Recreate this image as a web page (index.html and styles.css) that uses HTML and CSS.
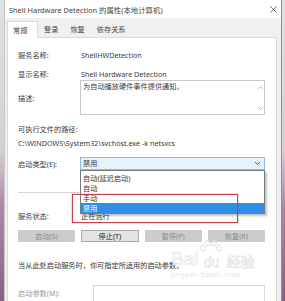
FILE: index.html
```html
<!DOCTYPE html>
<html>
<head>
<meta charset="utf-8">
<link rel="stylesheet" href="styles.css">
</head>
<body>
<div class="dialog">
  <div class="titlebar">
    <span class="title">Shell Hardware Detection 的属性(本地计算机)</span>
    <svg class="close" width="7" height="7" viewBox="0 0 7 7"><path d="M0.5 0.5L6.5 6.5M6.5 0.5L0.5 6.5" stroke="#555" stroke-width="0.9"/></svg>
  </div>
  <div class="tabs">
    <div class="tab active">常规</div>
    <div class="tab">登录</div>
    <div class="tab">恢复</div>
    <div class="tab">依存关系</div>
  </div>
  <div class="panel">
    <div class="row r-name"><span class="lbl">服务名称:</span><span class="val">ShellHWDetection</span></div>
    <div class="row r-disp"><span class="lbl">显示名称:</span><span class="val">Shell Hardware Detection</span></div>
    <div class="row r-desc">
      <span class="lbl">描述:</span>
      <div class="textbox">
        <span class="tb-text">为自动播放硬件事件提供通知。</span>
        <div class="scroll">
          <svg width="7" height="5" viewBox="0 0 7 5"><path d="M1 4L3.5 1.5L6 4" fill="none" stroke="#b5b5b5" stroke-width="0.9"/></svg>
          <svg width="7" height="5" viewBox="0 0 7 5"><path d="M1 1L3.5 3.5L6 1" fill="none" stroke="#b5b5b5" stroke-width="0.9"/></svg>
        </div>
      </div>
    </div>
    <div class="line r-pathlbl">可执行文件的路径:</div>
    <div class="line r-path">C:\WINDOWS\System32\svchost.exe -k netsvcs</div>
    <div class="row r-start">
      <span class="lbl">启动类型(E):</span>
      <div class="combo">
        <span>禁用</span>
        <svg width="7" height="5" viewBox="0 0 7 5"><path d="M1 1L3.5 3.5L6 1" fill="none" stroke="#444" stroke-width="0.9"/></svg>
        <div class="dropdown">
          <div class="opt">自动(延迟启动)</div>
          <div class="opt">自动</div>
          <div class="opt">手动</div>
          <div class="opt sel">禁用</div>
        </div>
      </div>
    </div>
    <div class="sep"></div>
    <div class="row r-status"><span class="lbl">服务状态:</span><span class="val">正在运行</span></div>
    <div class="buttons">
      <div class="btn dis">启动(S)</div>
      <div class="btn">停止(T)</div>
      <div class="btn dis">暂停(P)</div>
      <div class="btn dis">恢复(R)</div>
    </div>
    <div class="line r-note">当从此处启动服务时，你可指定所适用的启动参数。</div>
    <div class="row2 r-param"><span class="lbl dim">启动参数(M):</span><div class="input"></div></div>
    <div class="mark">
      <div class="mark-main"><span class="bai">Bai</span><span class="paw"><svg width="24" height="20" viewBox="0 0 24 20"><g fill="none" stroke="#e0e0e0" stroke-width="1"><ellipse cx="4" cy="9" rx="2.3" ry="2.8"/><ellipse cx="9" cy="4" rx="2.3" ry="2.8"/><ellipse cx="15" cy="4" rx="2.3" ry="2.8"/><ellipse cx="20" cy="9" rx="2.3" ry="2.8"/></g></svg><span class="du">du</span></span><span class="jy">经验</span></div>
      <div class="mark-url">jingyan.baidu.com</div>
    </div>
    <div class="redbox"></div>
  </div>
</div>
</body>
</html>
```
FILE: styles.css
```css
* { box-sizing: border-box; }
html, body { margin: 0; height: 301px; overflow: hidden; }
body {
  background: linear-gradient(to bottom, #e2e0e2 0%, #d6d0d5 50%, #b089a6 68%, #8d5f82 100%);
  font-family: "Noto Sans", "Noto Sans CJK SC", sans-serif;
  font-size: 7.2px;
  color: #3a3a3a;
}
.dialog {
  margin-left: 4px;
  width: 278px;
  height: 301px;
  border-left: 1px solid #c4c4c4;
  border-right: 1px solid #8e8e8e;
  background: #f0f0f0;
  display: flex;
  flex-direction: column;
  overflow: hidden;
}
.titlebar {
  height: 18px;
  flex: none;
  background: #fff;
  display: flex;
  align-items: center;
  justify-content: space-between;
  padding: 1px 4px 0 4px;
  color: #444;
  font-size: 7.4px;
}
.tabs {
  height: 19px;
  flex: none;
  display: flex;
  align-items: flex-end;
  padding-left: 2px;
  position: relative;
  z-index: 2;
}
.tab {
  height: 15px;
  padding: 0 6px;
  line-height: 14px;
  color: #444;
}
.tab.active {
  height: 17px;
  line-height: 16px;
  background: #fff;
  border: 1px solid #dadada;
  border-bottom: none;
  margin-bottom: -1px;
  width: 31px;
  padding: 0 0 0 5px;
}
.panel {
  flex: 1;
  margin: 0 4px 0 2px;
  background: #fff;
  border: 1px solid #dadada;
  padding: 11px 11px 0 10px;
  position: relative;
}
.row {
  display: grid;
  grid-template-columns: 62px 1fr;
  align-items: center;
  line-height: 12px;
}
.row2 {
  display: grid;
  grid-template-columns: 75px 1fr;
  align-items: center;
  line-height: 12px;
}
.val { padding-left: 1px; }
.line { line-height: 12px; }
.r-disp { margin-top: 7px; }
.textbox {
  height: 35px;
  border: 1px solid #c9c9c9;
  display: flex;
  justify-content: space-between;
  padding: 0 0 0 2px;
}
.tb-text { line-height: 11px; }
.scroll {
  width: 8px;
  display: flex;
  flex-direction: column;
  justify-content: space-between;
  align-items: center;
  padding: 4px 0 3px;
}
.scroll svg { display: block; }
.r-pathlbl { margin-top: 8px; }
.r-path { margin-top: 2px; }
.r-start { margin-top: 8px; }
.combo {
  position: relative;
  height: 13px;
  background: #e5f1fb;
  border: 1px solid #8cbbe8;
  display: flex;
  align-items: center;
  justify-content: space-between;
  padding: 0 3px 0 2px;
  line-height: 11px;
}
.dropdown {
  position: absolute;
  top: 12px;
  left: -1px;
  right: -1px;
  background: #fff;
  border: 1px solid #7a7a7a;
  padding: 2px 0 0;
  box-shadow: 2px 2px 2px rgba(0,0,0,0.25);
  z-index: 3;
}
.opt {
  height: 10px;
  line-height: 10px;
  padding-left: 2px;
  color: #333;
}
.opt.sel { background: #2f8fe6; color: #fff; }
.sep {
  margin-top: 22px;
  height: 1px;
  background: #d5d5d5;
}
.r-status { margin-top: 17px; }
.buttons {
  margin-top: 8px;
  display: grid;
  grid-template-columns: repeat(4, 1fr);
  gap: 6px;
}
.btn {
  height: 12px;
  line-height: 10px;
  text-align: center;
  background: #e3e3e3;
  border: 1px solid #adadad;
  color: #222;
}
.btn.dis {
  background: #cccccc;
  border-color: #cccccc;
  color: #8a8a8a;
}
.r-note { margin-top: 17px; color: #333; }
.r-param { margin-top: 14px; align-items: start; }
.dim { color: #9a9a9a; margin-top: 2px; }
.input { height: 20px; border: 1px solid #d9d9d9; }
.mark {
  position: absolute;
  left: 163px;
  top: 201px;
  width: 90px;
  pointer-events: none;
}
.mark-main {
  display: flex;
  align-items: flex-end;
  font-family: "Liberation Sans", sans-serif;
  font-size: 19px;
  line-height: 20px;
  -webkit-text-stroke: 0.6px #e2e2e2;
  color: rgba(255,255,255,0.6);
}
.paw {
  display: inline-flex;
  flex-direction: column;
  align-items: center;
  margin: 0 1px;
}
.paw svg { display: block; margin-bottom: -4px; }
.du { font-size: 14px; line-height: 14px; }
.jy {
  font-family: "Noto Sans CJK SC", sans-serif;
  font-size: 14px;
  line-height: 16px;
  margin-left: 2px;
}
.mark-url {
  font-family: "Liberation Sans", sans-serif;
  font-size: 8px;
  color: #e6e6e6;
  letter-spacing: 0.3px;
  margin-top: 1px;
}
.redbox {
  position: absolute;
  left: 64px;
  top: 156px;
  width: 166px;
  height: 29px;
  border: 1px solid #c8424c;
  box-shadow: 0 0 0 0.5px rgba(200,66,76,0.35);
  z-index: 4;
}
```
